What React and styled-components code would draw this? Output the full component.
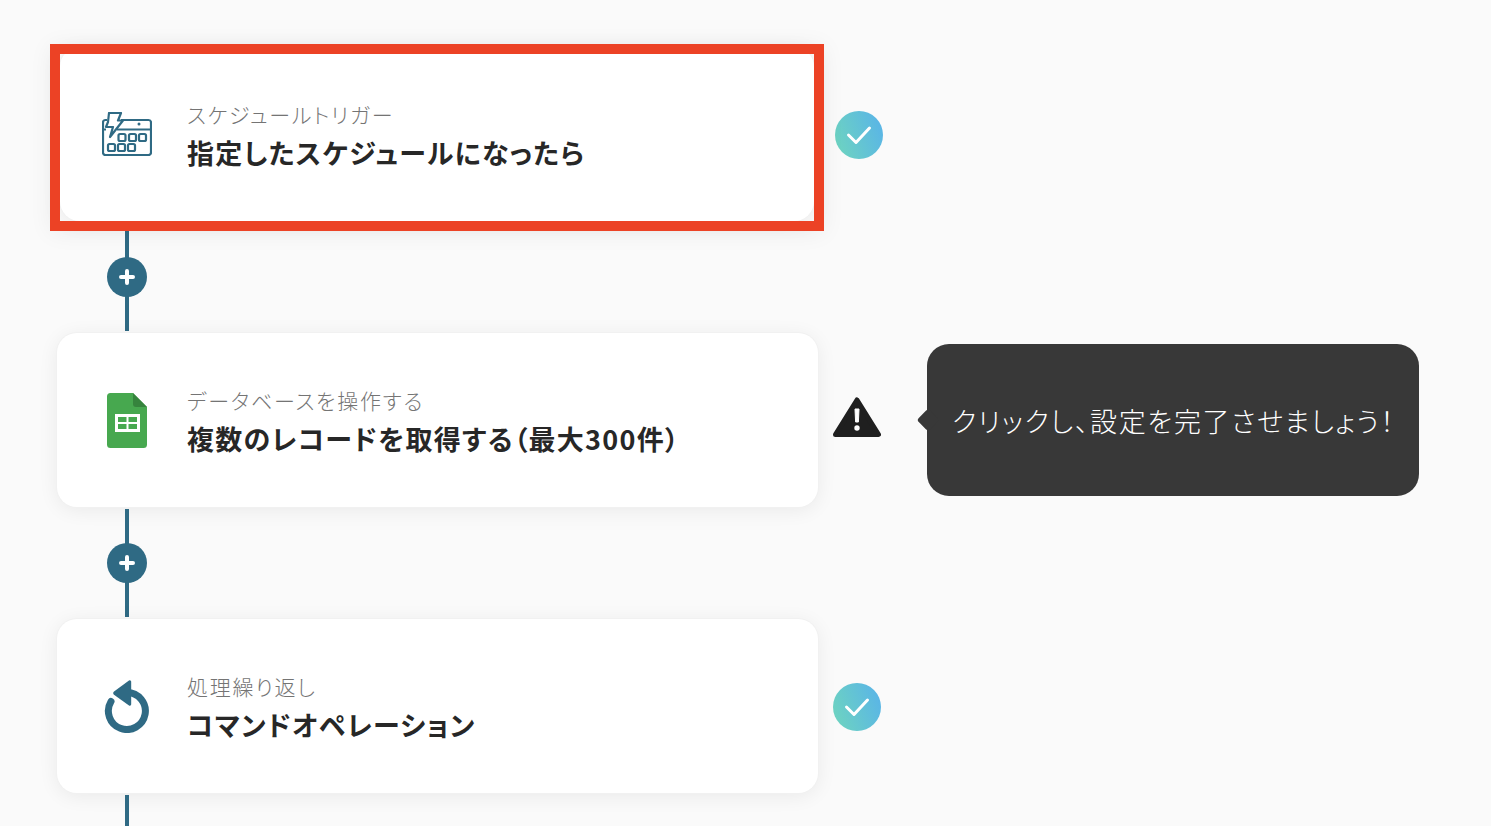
import React from 'react';
import styled, { createGlobalStyle } from 'styled-components';

const GlobalStyle = createGlobalStyle`
  html, body {
    margin: 0;
    height: 100%;
    overflow: hidden;
    background: #fafafa;
  }
  body {
    font-family: "Noto Sans CJK JP", "Noto Sans", sans-serif;
    font-feature-settings: "palt";
  }
`;

const Flow = styled.div`
  display: flex;
  flex-direction: column;
  padding: 47px 0 0 57px;
`;

const StepRow = styled.div`
  display: flex;
  align-items: center;
  width: 900px;
  position: relative;
`;

const Card = styled.div`
  position: relative;
  box-sizing: border-box;
  width: ${(p) => (p.$highlighted ? '754px' : '761px')};
  height: 174px;
  margin-left: ${(p) => (p.$highlighted ? '3px' : '0')};
  padding: 3px 0 0 ${(p) => (p.$highlighted ? '127px' : '130px')};
  display: flex;
  flex-direction: column;
  justify-content: center;
  background: #fff;
  border-radius: 20px;
  box-shadow: 0 0 0 1px #f1f1f1, 0 3px 20px rgba(0, 0, 0, 0.07);
`;

const Highlight = styled.div`
  position: absolute;
  z-index: 1;
  top: -3px;
  left: -10px;
  right: -10px;
  bottom: -10px;
  border: 10px solid #ec4225;
  box-shadow: 0 2px 22px rgba(0, 0, 0, 0.06);
  pointer-events: none;
`;

const IconSlot = styled.div`
  position: absolute;
  left: ${(p) => (p.$highlighted ? '37px' : '40px')};
  top: 50%;
  width: 60px;
  height: 60px;
  margin-top: -30px;
  display: flex;
  align-items: center;
  justify-content: center;
`;

const Label = styled.div`
  font-size: 21px;
  line-height: 30px;
  font-weight: 300;
  color: #747474;
  letter-spacing: 1.75px;
  white-space: nowrap;
`;

const Title = styled.div`
  margin-top: 4px;
  font-size: 27px;
  line-height: 40px;
  font-weight: 700;
  color: #272727;
  letter-spacing: 1.3px;
  white-space: nowrap;
`;

const Status = styled.div`
  margin-left: ${(p) => (p.$highlighted ? '21px' : '15px')};
  margin-top: ${(p) => (p.$warning ? '-2px' : '2px')};
  width: 48px;
  height: 48px;
  display: flex;
  align-items: flex-start;
  justify-content: center;
`;

const CheckCircle = styled.div`
  width: 48px;
  height: 48px;
  border-radius: 50%;
  background: linear-gradient(70deg, #6fd6bd 0%, #58b2ea 100%);
  display: flex;
  align-items: center;
  justify-content: center;
`;

const Connector = styled.div`
  position: relative;
  width: 4px;
  height: 108px;
  margin: 2px 0 2px 68px;
  background: #2f6a84;
  display: flex;
  align-items: center;
  justify-content: center;
  flex-shrink: 0;
`;

const AddButton = styled.div`
  flex-shrink: 0;
  width: 40px;
  height: 40px;
  border-radius: 50%;
  background: #2f6a84;
  display: flex;
  align-items: center;
  justify-content: center;
`;

const Tooltip = styled.div`
  position: absolute;
  left: 870px;
  top: 11px;
  box-sizing: border-box;
  width: 492px;
  height: 152px;
  padding-left: 25px;
  display: flex;
  align-items: center;
  background: #383838;
  border-radius: 22px;
  color: #fff;
  font-size: 27px;
  font-weight: 300;
  letter-spacing: 1.65px;
  white-space: nowrap;
  &::before {
    content: '';
    position: absolute;
    left: -7px;
    top: 50%;
    width: 16px;
    height: 16px;
    margin-top: -8px;
    background: #383838;
    border-radius: 3px;
    transform: rotate(45deg);
  }
`;

const ScheduleIcon = () => (
  <svg width="50" height="44" viewBox="0 0 50 44" fill="none" stroke="#2f6a84" strokeWidth="2.200">
    <path d="M5 8H3.500A2.500 2.500 0 0 0 1 10.500v30.500A2.500 2.500 0 0 0 3.500 43h43a2.500 2.500 0 0 0 2.500-2.500V10.500A2.500 2.500 0 0 0 46.500 8H19" />
    <path d="M15 17.500H49M1 17.500h3" />
    <path d="M7 1h12l-3 7.500h5L8 25l3-10H4l2-5z" fill="#fff" strokeLinejoin="round" />
    <circle cx="37" cy="12" r="1.500" fill="#2f6a84" stroke="none" />
    {[16.5, 27, 37].map((x) => (
      <rect key={x + 'a'} x={x} y="22" width="7" height="7" rx="1.500" />
    ))}
    {[6, 16, 26].map((x) => (
      <rect key={x + 'b'} x={x} y="32" width="7" height="7" rx="1.500" />
    ))}
  </svg>
);

const SheetsIcon = () => (
  <svg width="40" height="58" viewBox="0 -2 40 58">
    <path d="M26 0H3.500A3.500 3.500 0 0 0 0 3.500v48A3.500 3.500 0 0 0 3.500 55h33a3.500 3.500 0 0 0 3.500-3.500V14z" fill="#47a84f" />
    <path d="M26 0l14 14H29a3 3 0 0 1-3-3z" fill="#36843d" />
    <path d="M8 21h25v18H8zm3 3v5h8.500v-5zm10.500 0v5H30v-5zM11 31v5h8.500v-5zm10.500 0v5H30v-5z" fill="#fff" fillRule="evenodd" />
  </svg>
);

const LoopIcon = () => (
  <svg width="46" height="54" viewBox="0 0 46 54" fill="none">
    <path d="M7 22.500A18.500 18.500 0 1 0 23 13.500" stroke="#2f6a84" strokeWidth="7" strokeLinecap="round" />
    <path d="M25 1.500L10 12.500a2 2 0 0 0 0 3.200l15 10.800a1.500 1.500 0 0 0 2.200-1.300V2.800a1.500 1.500 0 0 0-2.200-1.300z" fill="#2f6a84" />
  </svg>
);

const CheckMark = () => (
  <svg width="26" height="20" viewBox="0 0 26 20" fill="none" stroke="#fff" strokeWidth="3" strokeLinecap="round" strokeLinejoin="round">
    <path d="M2.500 10l7.500 7.500L23.500 3" />
  </svg>
);

const PlusMark = () => (
  <svg width="16" height="16" viewBox="0 0 16 16" stroke="#fff" strokeWidth="4" strokeLinecap="round">
    <path d="M8 2v12M2 8h12" />
  </svg>
);

const WarningIcon = () => (
  <svg width="48" height="48" viewBox="0 0 48 48">
    <path d="M24 5L45.500 39.500H2.500z" fill="#1f1f1f" stroke="#1f1f1f" strokeWidth="5" strokeLinejoin="round" />
    <path d="M22 14h4l-0.600 13h-2.800z" fill="#fff" stroke="#fff" strokeWidth="1" strokeLinejoin="round" />
    <circle cx="24" cy="33" r="2.700" fill="#fff" />
  </svg>
);

const steps = [
  { label: 'スケジュールトリガー', title: '指定したスケジュールになったら', icon: <ScheduleIcon />, highlighted: true },
  { label: 'データベースを操作する', title: '複数のレコードを取得する（最大300件）', icon: <SheetsIcon />, warning: true },
  { label: '処理繰り返し', title: 'コマンドオペレーション', icon: <LoopIcon /> },
];

export default function App() {
  return (
    <>
      <GlobalStyle />
      <Flow>
        {steps.map((step) => (
          <React.Fragment key={step.label}>
            <StepRow>
              <Card $highlighted={step.highlighted}>
                <IconSlot $highlighted={step.highlighted}>{step.icon}</IconSlot>
                <Label>{step.label}</Label>
                <Title>{step.title}</Title>
                {step.highlighted && <Highlight />}
              </Card>
              <Status $highlighted={step.highlighted} $warning={step.warning}>
                {step.warning ? (
                  <WarningIcon />
                ) : (
                  <CheckCircle>
                    <CheckMark />
                  </CheckCircle>
                )}
              </Status>
              {step.warning && <Tooltip>クリックし、設定を完了させましょう！</Tooltip>}
            </StepRow>
            <Connector>
              <AddButton>
                <PlusMark />
              </AddButton>
            </Connector>
          </React.Fragment>
        ))}
      </Flow>
    </>
  );
}
